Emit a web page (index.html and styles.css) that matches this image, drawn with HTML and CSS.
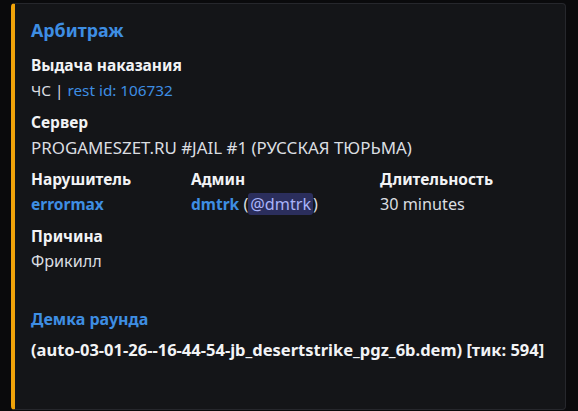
FILE: index.html
```html
<!DOCTYPE html>
<html lang="ru">
<head>
<meta charset="utf-8">
<link rel="stylesheet" href="styles.css">
</head>
<body>
<div class="wrap">
  <article class="embed">
    <h1 class="title">Арбитраж</h1>
    <div class="fields">
      <div class="field full">
        <div class="name">Выдача наказания</div>
        <div class="value compact">ЧС | <span class="link">rest id: 106732</span></div>
      </div>
      <div class="field full">
        <div class="name">Сервер</div>
        <div class="value caps">PROGAMESZET.RU #JAIL #1 (РУССКАЯ ТЮРЬМА)</div>
      </div>
      <div class="field">
        <div class="name">Нарушитель</div>
        <div class="value"><span class="link strong">errormax</span></div>
      </div>
      <div class="field">
        <div class="name">Админ</div>
        <div class="value"><span class="link strong">dmtrk</span> (<span class="mention">@dmtrk</span>)</div>
      </div>
      <div class="field">
        <div class="name">Длительность</div>
        <div class="value">30 minutes</div>
      </div>
      <div class="field full">
        <div class="name">Причина</div>
        <div class="value">Фрикилл</div>
      </div>
      <div class="field full demo">
        <div class="demo-link">Демка раунда</div>
        <div class="demo-file">(auto-03-01-26--16-44-54-jb_desertstrike_pgz_6b.dem) [тик: 594]</div>
      </div>
    </div>
  </article>
</div>
</body>
</html>
```

FILE: styles.css
```css
html, body {
  margin: 0;
  padding: 0;
  background: #0a0a0c;
  height: 100%;
}
body {
  font-family: "Noto Sans", "Open Sans", sans-serif;
  font-size: 16px;
  color: #dbdee1;
}
.wrap {
  padding: 3px 12px 0 11px;
}
.embed {
  box-sizing: border-box;
  height: 407px;
  background: #141518;
  border: 1px solid #26272c;
  border-left: 4px solid #f0a30a;
  border-radius: 4px;
  padding: 15px 16px 16px 16px;
}
.title {
  margin: 0;
  font-size: 17.8px;
  line-height: 22px;
  font-weight: 700;
  color: #3e8ee3;
}
.fields {
  margin-top: 13px;
  display: grid;
  grid-template-columns: 160px 189px 1fr;
  row-gap: 9px;
}
.field.full {
  grid-column: 1 / -1;
}
.name {
  font-weight: 700;
  line-height: 22px;
  margin-bottom: 3px;
  color: #f2f3f5;
  font-size: 15.5px;
}
.value {
  line-height: 23px;
  font-size: 16.2px;
}
.value.compact {
  font-size: 15.3px;
}
.value.caps {
  font-size: 16.9px;
}
.link {
  color: #3e8ee3;
}
.strong {
  font-weight: 700;
  font-size: 15.5px;
}
.mention {
  background: #2b2e5c;
  color: #a9b4fa;
  border-radius: 3px;
  padding: 0 2px;
}
.demo {
  margin-top: 26px;
}
.demo-link {
  color: #3e8ee3;
  font-weight: 700;
  font-size: 16px;
  line-height: 22px;
}
.demo-file {
  margin-top: 9px;
  color: #f2f3f5;
  font-weight: 700;
  font-size: 16.5px;
  line-height: 22px;
  white-space: nowrap;
}
```
